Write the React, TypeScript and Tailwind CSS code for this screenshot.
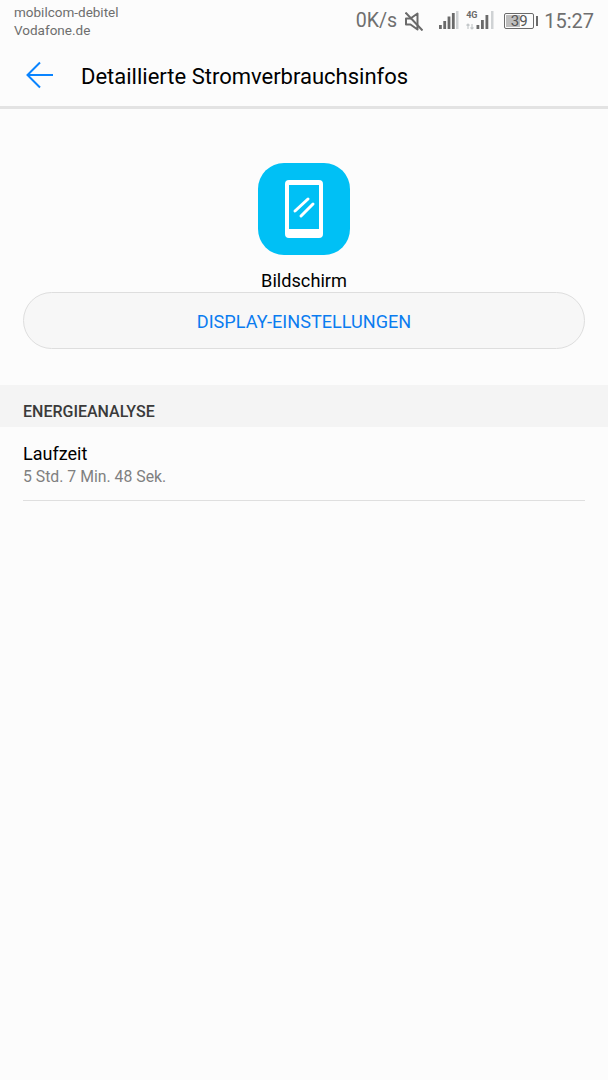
const Bars = () => (
  <svg width="20" height="20" viewBox="0 0 20 20" className="block">
    <rect x="0" y="14" width="2.800" height="4" fill="#6a6a6a" />
    <rect x="4.300" y="10" width="2.800" height="8" fill="#6a6a6a" />
    <rect x="8.600" y="5.500" width="2.800" height="12.500" fill="#6a6a6a" />
    <rect x="12.900" y="2" width="2.800" height="16" fill="#6a6a6a" />
    <rect x="17" y="0" width="2.500" height="18" fill="#cfd2d4" />
  </svg>
);

const Bars4G = () => (
  <svg width="28" height="20" viewBox="0 0 28 20" className="block">
    <rect x="10.500" y="14" width="2.800" height="4" fill="#6a6a6a" />
    <rect x="15" y="9" width="2.800" height="9" fill="#6a6a6a" />
    <rect x="19.500" y="4" width="2.800" height="14" fill="#6a6a6a" />
    <rect x="25" y="0" width="2.500" height="18" fill="#cfd2d4" />
    <path d="M2 18v-5M0.500 14.500L2 13l1.500 1.500M6 13v5M4.500 16.500L6 18l1.500-1.500" stroke="#c4c8ca" strokeWidth="1.200" fill="none" />
  </svg>
);

export default function App() {
  return (
    <div className="w-[608px] h-[1080px] bg-[#fcfcfc] flex flex-col font-['Roboto',sans-serif] overflow-hidden">
      <div className="h-[44px] flex justify-between pl-[14px] pr-[14px]">
        <div className="pt-[3px] text-[13.500px] leading-[18px] text-[#6e6e6e]">
          <div>mobilcom-debitel</div>
          <div>Vodafone.de</div>
        </div>
        <div className="flex items-center h-[42px] text-[#6f6f6f]">
          <span className="text-[19.600px] leading-none mr-[8px]">0K/s</span>
          <svg width="18" height="19" viewBox="0 0 18 19" fill="none" stroke="#6a6a6a" strokeWidth="2" className="mr-[16px]">
            <path d="M1 6.500h4.500L12.500 1.500v16L5.500 12.500H1z" strokeLinejoin="round" />
            <path d="M0.500 0.500L17.500 18.500" />
          </svg>
          <Bars />
          <span className="relative w-[28px] h-[20px] ml-[7px] mr-[10px]">
            <span className="absolute left-0 -top-[1px] text-[9px] font-bold leading-[11px] text-[#6a6a6a]">4G</span>
            <Bars4G />
          </span>
          <div className="relative w-[30px] h-[16px] border border-[#6a6a6a] rounded-[2px] flex items-center justify-center">
            <div className="absolute left-[1px] top-[1px] bottom-[1px] w-[14px] bg-[#bdbdbd]" />
            <span className="relative text-[15px] leading-[14px] text-[#555555]">39</span>
          </div>
          <div className="w-[2px] h-[10px] ml-[2px] mr-[6px] bg-[#6a6a6a]" />
          <span className="text-[20px] leading-none">15:27</span>
        </div>
      </div>
      <div className="h-[65px] flex items-center border-b-[3px] border-[#e3e3e3]">
        <svg width="28" height="28" viewBox="0 0 28 28" fill="none" stroke="#0a84ff" strokeWidth="2" className="ml-[26px]">
          <path d="M27 14H2M14 1.500L1.500 14 14 26.500" />
        </svg>
        <span className="ml-[27px] mt-[2px] text-[22px] text-black">Detaillierte Stromverbrauchsinfos</span>
      </div>
      <div className="flex flex-col items-center pt-[54px]">
        <div className="w-[92px] h-[92px] rounded-[26px] bg-[#00c0f5] flex items-center justify-center">
          <svg width="38" height="58" viewBox="0 0 38 58" fill="none">
            <path
              fillRule="evenodd"
              fill="#fff"
              d="M4 0h30a4 4 0 0 1 4 4v50a4 4 0 0 1-4 4H4a4 4 0 0 1-4-4V4a4 4 0 0 1 4-4zM4 5v44h30V5z"
            />
            <path d="M10 31L23 19M16 36L28 24" stroke="#fff" strokeWidth="3" strokeLinecap="round" />
          </svg>
        </div>
        <div className="mt-[15px] text-[18.200px] leading-[21px] text-black">Bildschirm</div>
      </div>
      <div className="mx-[23px] mt-[1px] h-[57px] pt-[2px] rounded-[29px] border border-[#dedede] bg-[#f7f7f7] flex items-center justify-center text-[#0a7cf0] text-[18.100px]">
        DISPLAY-EINSTELLUNGEN
      </div>
      <div className="mt-[36px] h-[42px] bg-[#f4f4f4] flex items-center pt-[12px] px-[23px] text-[16px] font-medium text-[#3a3a3a]">
        ENERGIEANALYSE
      </div>
      <div className="mx-[23px] h-[74px] border-b border-[#dfdfdf] pt-[15px]">
        <div className="text-[18px] leading-[23px] text-black">Laufzeit</div>
        <div className="text-[15.800px] leading-[23px] text-[#808080]">5 Std. 7 Min. 48 Sek.</div>
      </div>
    </div>
  );
}
